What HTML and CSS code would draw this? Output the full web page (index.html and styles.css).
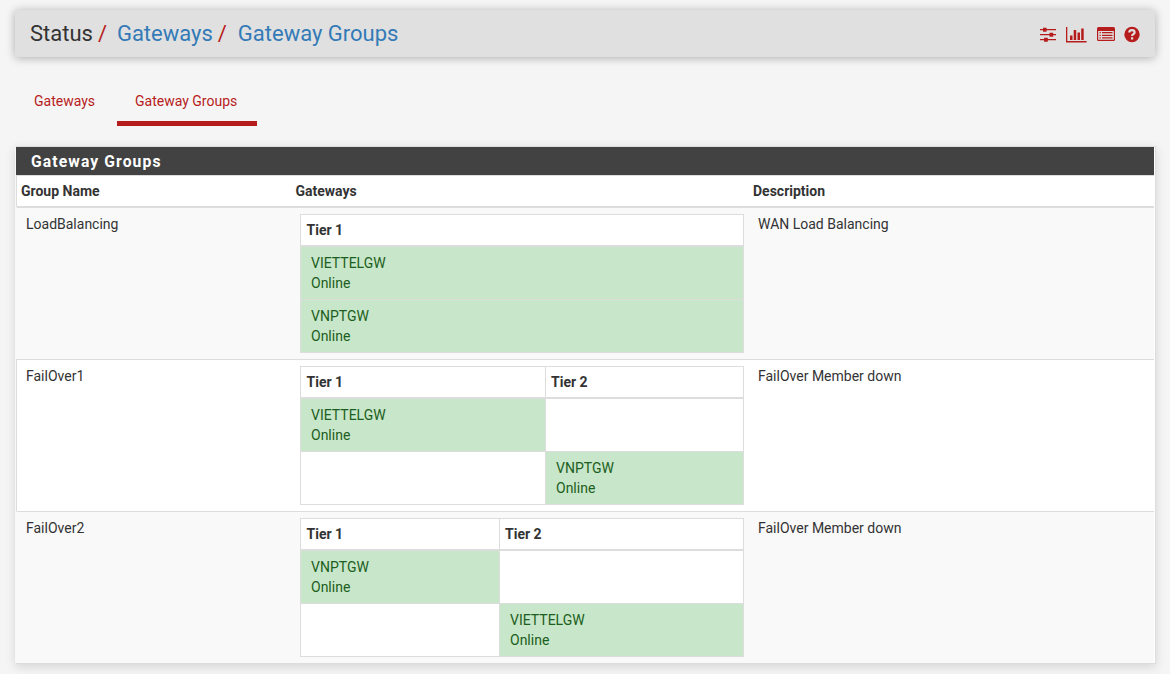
FILE: index.html
```html
<!DOCTYPE html>
<html lang="en">
<head>
<meta charset="utf-8">
<title>Status: Gateways: Gateway Groups</title>
<link rel="stylesheet" href="styles.css">
</head>
<body>
<header class="header">
  <nav class="crumbs"><span>Status</span><i>/</i><a>Gateways</a><i>/</i><a>Gateway Groups</a></nav>
  <div class="icons">
    <svg class="ic-sliders" width="16" height="16" viewBox="0 0 16 16"><path d="M0 2h16v1.300H0zM0 7h16v1.300H0zM0 12h16v1.300H0z"/><path d="M3 .7h3.600v4H3zM9.500 5.700h3.700v4H9.500zM4 10.700h3.800v4H4z"/></svg>
    <svg class="ic-chart" width="21" height="16" viewBox="0 0 21 16"><path d="M0 0h1.300v14H20.600v1.500H0zM4 8.500h2.500v4.500H4zM7.700 3h2.500v10H7.700zM11.500 5.500h2.500v7.500h-2.500zM15.200 1.500h2.500V13h-2.500z"/></svg>
    <svg class="ic-list" width="18" height="16" viewBox="0 0 18 16"><path fill-rule="evenodd" d="M1.500 0h15Q18 0 18 1.500v11Q18 14 16.500 14h-15Q0 14 0 12.500v-11Q0 0 1.500 0zM1.200 4v8.800h15.600V4z"/><path d="M2.500 5h1.300v1.300H2.500zM5 5h10.500v1.300H5zM2.500 7.700h1.300V9H2.500zM5 7.700h10.500V9H5zM2.500 10.300h1.300v1.300H2.500zM5 10.300h10.500v1.300H5z"/></svg>
    <svg class="ic-help" width="16" height="16" viewBox="0 0 16 16"><circle cx="8" cy="7.500" r="7.700"/><path class="mark" d="M5.300 5.500C5.300 2.400 10.600 2.400 10.600 5.500C10.600 7.300 8.100 7.100 8.100 9M8.100 10.200v2.200"/></svg>
  </div>
</header>
<nav class="tabs"><a class="tab">Gateways</a><a class="tab active">Gateway Groups</a></nav>
<main class="panel">
  <h2 class="title">Gateway Groups</h2>
  <div class="row head"><span>Group Name</span><span>Gateways</span><span>Description</span></div>
  <div class="row odd">
    <div class="name">LoadBalancing</div>
    <div class="tiers one">
      <b class="th">Tier 1</b>
      <div class="gw on">VIETTELGW<br>Online</div>
      <div class="gw on">VNPTGW<br>Online</div>
    </div>
    <div class="desc">WAN Load Balancing</div>
  </div>
  <div class="row">
    <div class="name">FailOver1</div>
    <div class="tiers wide-first">
      <b class="th">Tier 1</b><b class="th">Tier 2</b>
      <div class="gw on">VIETTELGW<br>Online</div><div class="gw"></div>
      <div class="gw"></div><div class="gw on">VNPTGW<br>Online</div>
    </div>
    <div class="desc">FailOver Member down</div>
  </div>
  <div class="row odd">
    <div class="name">FailOver2</div>
    <div class="tiers wide-second">
      <b class="th">Tier 1</b><b class="th">Tier 2</b>
      <div class="gw on">VNPTGW<br>Online</div><div class="gw"></div>
      <div class="gw"></div><div class="gw on">VIETTELGW<br>Online</div>
    </div>
    <div class="desc">FailOver Member down</div>
  </div>
</main>
</body>
</html>
```
FILE: styles.css
```css
* { box-sizing: border-box; }
body {
  margin: 0;
  padding: 10px 15px 0;
  height: 674px;
  overflow: hidden;
  background: #f5f5f5;
  color: #333;
  font: 14px/20px Roboto, sans-serif;
}
.header {
  display: flex;
  align-items: center;
  justify-content: space-between;
  height: 47px;
  padding: 0 15px;
  background: #e0e0e0;
  border-radius: 3px;
  box-shadow: 0 1px 10px rgba(0, 0, 0, .3);
}
.crumbs { display: flex; font-size: 22px; line-height: 24px; }
.crumbs i { width: 25px; padding-left: 5px; font-style: normal; color: #b71c1c; }
.crumbs i:first-of-type { width: 24px; }
.crumbs a { color: #337ab7; }
.icons { display: flex; align-items: center; padding-top: 2px; fill: #b71c1c; }
.ic-chart { margin-left: 10px; }
.ic-list { margin-left: 9.500px; }
.ic-help { margin-left: 9.500px; overflow: visible; }
.mark { fill: none; stroke: #e0e0e0; stroke-width: 2.200; }
.tabs { display: flex; gap: 4px; height: 49px; margin: 20px 0 20px 1px; }
.tab { padding: 14px 18px 0; color: #b71c1c; }
.active { padding-right: 20px; border-bottom: 5px solid #b71c1c; }
.panel {
  width: 1141px;
  background: #fff;
  border: 1px solid #ddd;
  border-left-color: #f8f8f8;
  padding-right: 1px;
  box-shadow: 0 3px 10px rgba(0, 0, 0, .13);
}
.title {
  height: 28px;
  margin: 0;
  padding-left: 15px;
  background: #424242;
  color: #fff;
  font-size: 15.700px;
  font-weight: 700;
  line-height: 30px;
  letter-spacing: 1.100px;
}
.row {
  display: grid;
  grid-template-columns: 283px 458px 1fr;
  height: 152px;
  border-top: 1px solid #ddd;
  border-left: 1px solid #ddd;
}
.head {
  height: 31px;
  padding: 5px 0 0 4px;
  font-weight: 700;
  grid-template-columns: 274.500px 457.500px 1fr;
}
.odd { background: #f9f9f9; border-left-color: #f9f9f9; }
.head + .row { height: 153px; border-top-width: 2px; }
.name { padding: 6px 0 0 9px; }
.desc { padding-top: 6px; }
.tiers {
  display: grid;
  gap: 1px;
  grid-template-rows: 31px 52px 52px;
  align-self: start;
  width: 444px;
  height: 139px;
  margin-top: 6px;
  padding: 1px;
  background: #ddd;
}
.one { grid-template-columns: 442px; }
.wide-first { grid-template-columns: 244px 197px; }
.wide-second { grid-template-columns: 198px 243px; }
.th { padding: 5px; border-bottom: 1px solid #ddd; background: #fff; }
.th:first-child { padding-left: 5.500px; }
.gw { padding: 6px 10px; background: #fff; }
.on { background: #c8e6c9; color: #1b5e20; }
```
